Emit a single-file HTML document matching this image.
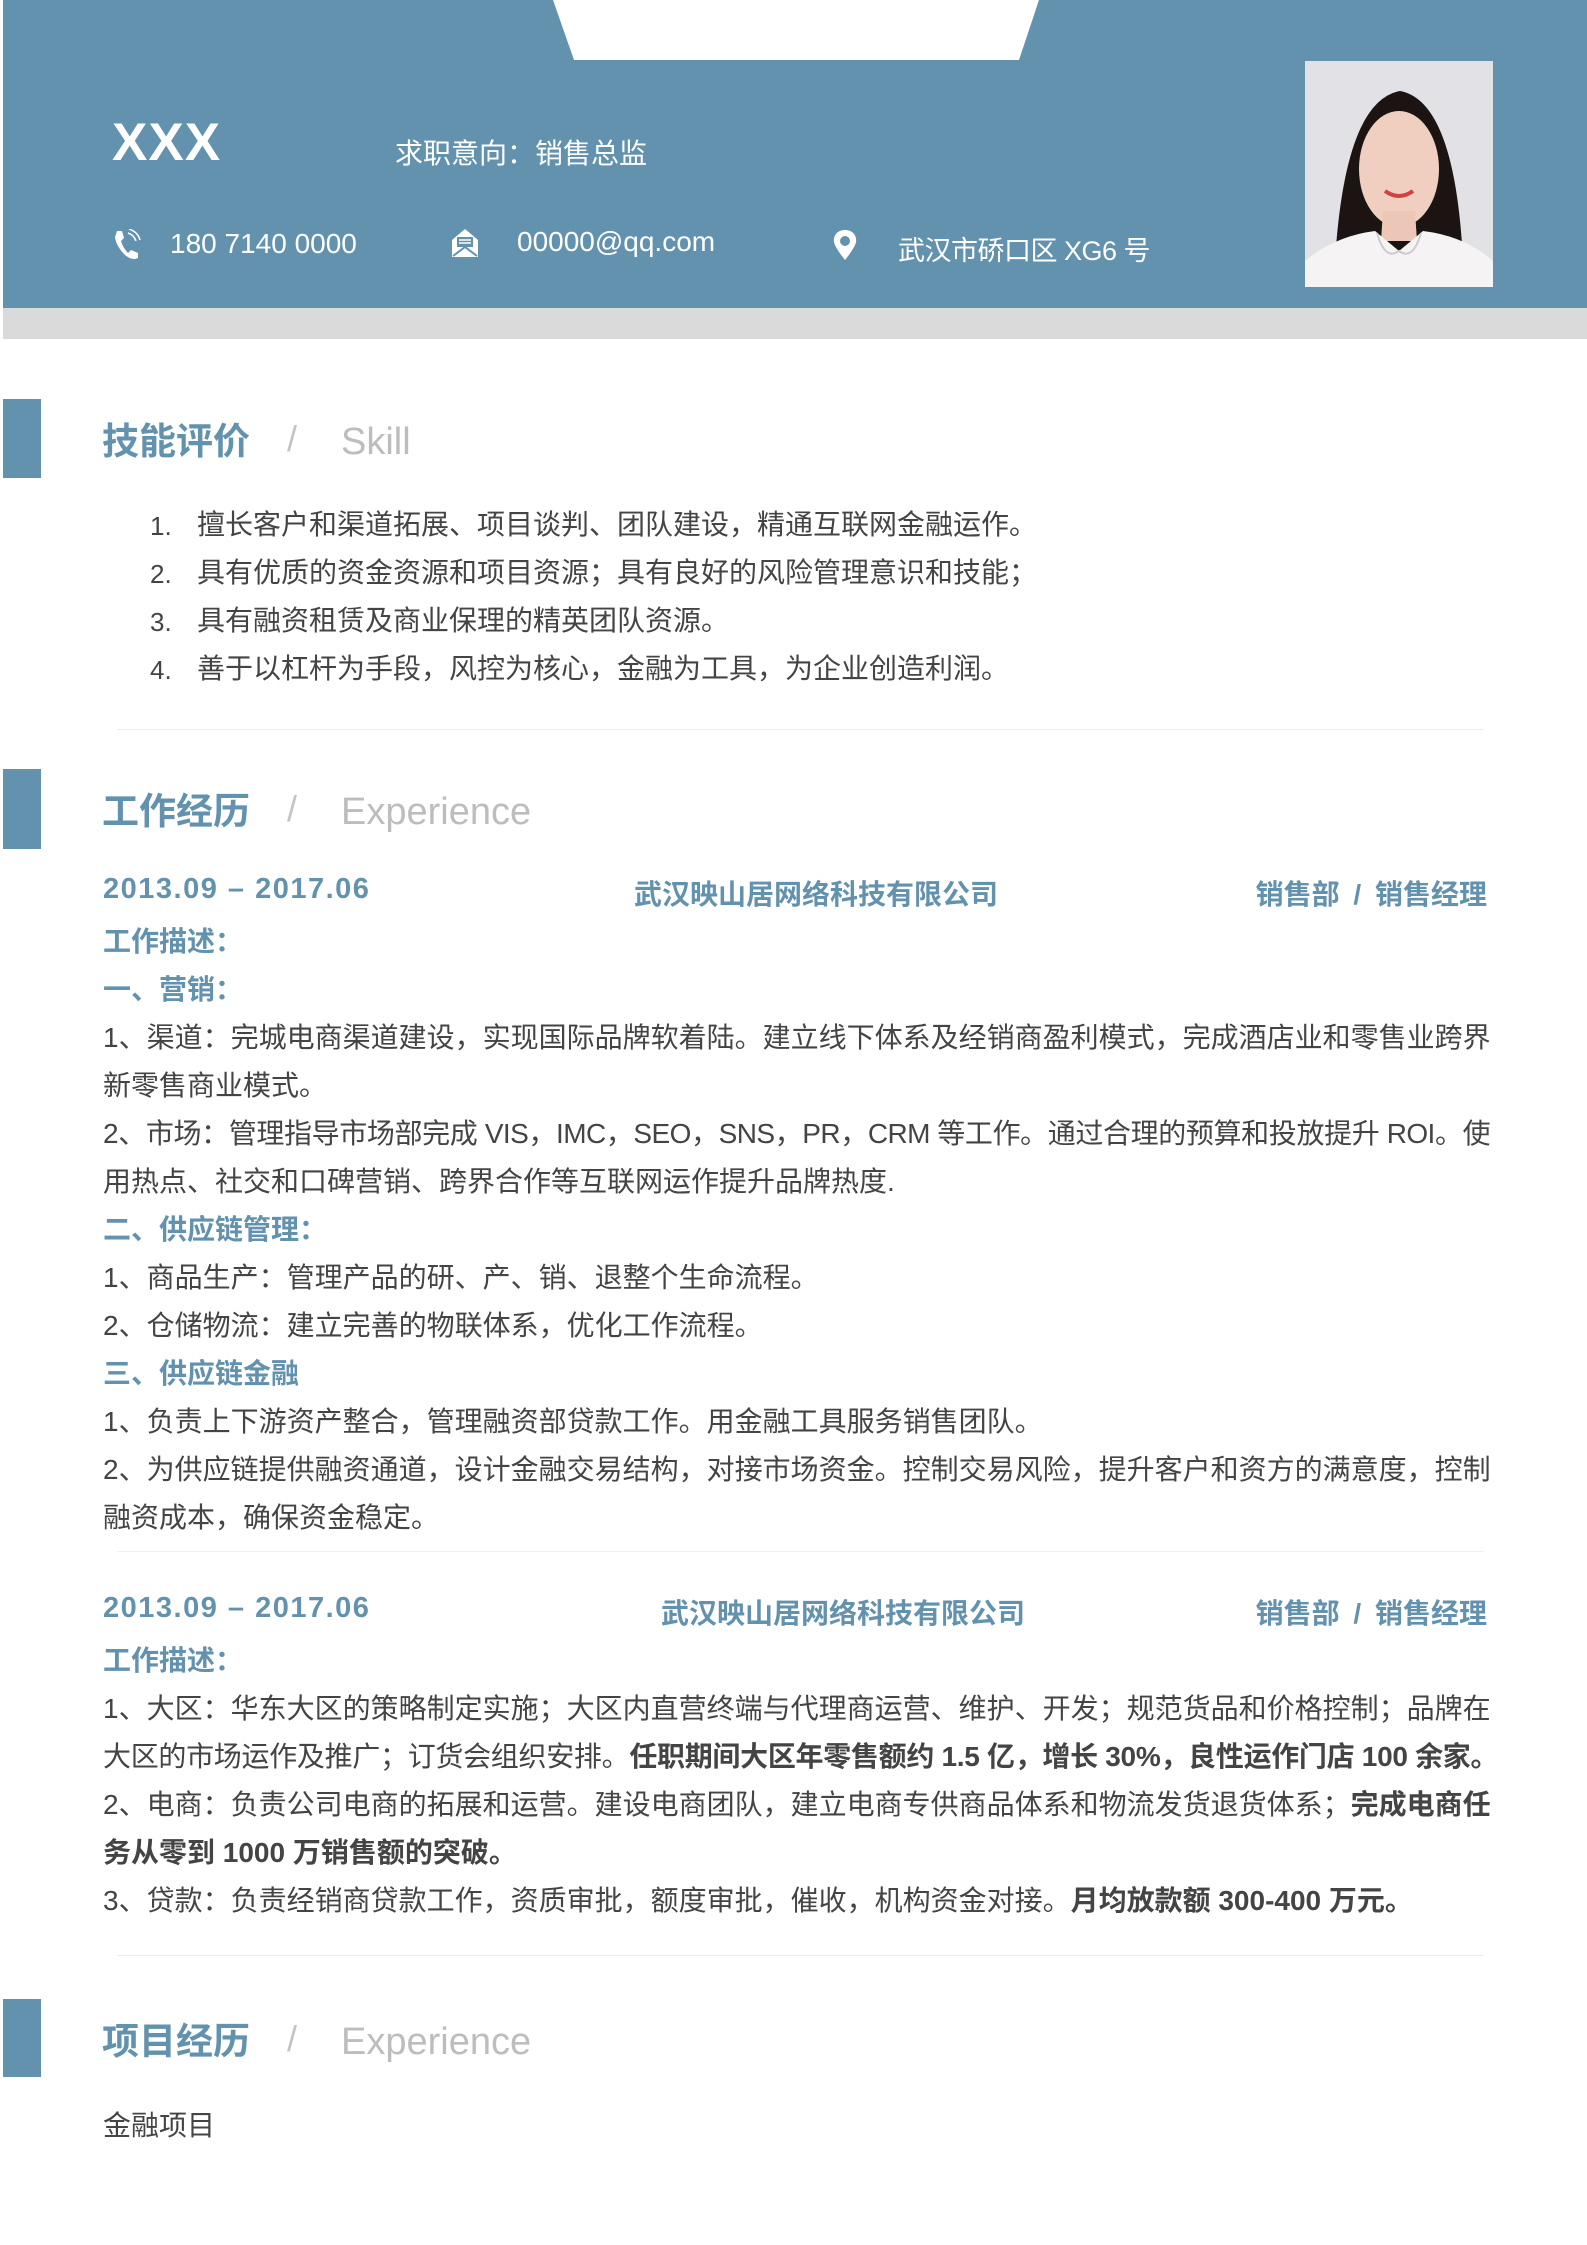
<!DOCTYPE html>
<html><head><meta charset="utf-8"><style>
*{margin:0;padding:0;box-sizing:border-box}
body{width:1587px;height:2245px;background:#fff;position:relative;overflow:hidden;font-family:"Liberation Sans","Noto Sans CJK SC",sans-serif;color:#444}
.a{position:absolute;white-space:nowrap}
.hdr{position:absolute;left:3px;top:0;width:1584px;height:308px;background:#6392ae}
.gray{position:absolute;left:3px;top:308px;width:1584px;height:31px;background:#dadada}
.bar{position:absolute;left:3px;width:38px;background:#6392ae}
.tt{font-size:37px;font-weight:bold;color:#6392ae}
.sl{font-size:36px;color:#c4c4c4}
.en{font-size:38px;color:#bdbdbd}
.b{color:#6392ae;font-weight:bold;font-size:28px}
.d{letter-spacing:1.5px;font-size:29px}
.t{position:absolute;left:103px;width:1387px;font-size:28px;line-height:48px;white-space:nowrap}
.j{text-align:justify;text-align-last:justify}
.hr{position:absolute;left:117px;width:1367px;height:1px;background:#ececec}
</style></head><body>
<div class="hdr"></div>
<svg class="a" style="left:553px;top:0" width="487" height="61"><polygon points="0,0 486,0 466,60 21,60" fill="#fff"/></svg>
<div class="gray"></div>
<div class="a" style="left:112px;top:112px;font-size:53px;font-weight:bold;color:#fff;letter-spacing:1px">XXX</div>
<div class="a" style="left:395px;top:132px;font-size:28px;color:#fff">求职意向：销售总监</div>
<svg class="a" style="left:112px;top:229px" width="30" height="32" viewBox="0 0 30 32"><path d="M5 2 L10 2 L12 9 L9 12 Q11 19 16 24 L19 21 L26 24 L26 29 Q20 32 13 26 Q4 17 3 8 Z" fill="#fff"/><path d="M16 4 Q22 6 24 12 M17 0 Q26 3 28 11" stroke="#fff" stroke-width="1.5" fill="none"/></svg>
<div class="a" style="left:170px;top:228px;font-size:28px;color:#fff">180 7140 0000</div>
<svg class="a" style="left:451px;top:228px" width="28" height="30" viewBox="0 0 28 30"><path d="M1 12 L14 1 L27 12 L27 29 L1 29 Z" fill="#fff"/><rect x="6" y="9" width="16" height="10" fill="#6392ae"/><path d="M8 12h12M8 15h12" stroke="#fff" stroke-width="1.5"/><path d="M2 28 L14 19 L26 28" stroke="#6392ae" stroke-width="2" fill="none"/></svg>
<div class="a" style="left:517px;top:226px;font-size:28px;color:#fff">00000@qq.com</div>
<svg class="a" style="left:832px;top:229px" width="26" height="32" viewBox="0 0 26 32"><path d="M13 1 C5 1 1 7 2 13 C3 19 13 31 13 31 C13 31 23 19 24 13 C25 7 21 1 13 1 Z" fill="#fff"/><circle cx="13" cy="12" r="5" fill="#6392ae"/></svg>
<div class="a" style="left:898px;top:229px;font-size:27px;color:#fff;letter-spacing:-0.5px">武汉市硚口区 XG6 号</div>
<svg class="a" style="left:1305px;top:61px" width="188" height="226" viewBox="0 0 188 226"><rect width="188" height="226" fill="#e2e1e6"/><path d="M30 200 Q40 40 95 30 Q150 40 158 200 Z" fill="#1c1412"/><ellipse cx="94" cy="108" rx="40" ry="58" fill="#f0cfc0"/><path d="M78 150 L110 150 L112 180 L76 180 Z" fill="#ecc7b8"/><path d="M0 226 L0 200 Q30 175 70 170 L94 190 L118 170 Q160 175 188 200 L188 226 Z" fill="#f6f3f4"/><path d="M72 172 Q80 200 94 190 Q108 200 116 172" stroke="#ccc" stroke-width="2" fill="none"/><path d="M80 130 Q94 140 108 130" stroke="#c44" stroke-width="4" fill="none"/></svg>

<div class="bar" style="top:399px;height:79px"></div>
<div class="a tt" style="left:102px;top:411px">技能评价</div>
<div class="a sl" style="left:287px;top:418px">/</div>
<div class="a en" style="left:341px;top:421px">Skill</div>
<div class="a" style="left:150px;top:502px;font-size:26px;line-height:48px;color:#444">1.<br>2.<br>3.<br>4.</div>
<div class="a" style="left:197px;top:501px;font-size:28px;line-height:48px;color:#444">擅长客户和渠道拓展、项目谈判、团队建设，精通互联网金融运作。<br>具有优质的资金资源和项目资源；具有良好的风险管理意识和技能；<br>具有融资租赁及商业保理的精英团队资源。<br>善于以杠杆为手段，风控为核心，金融为工具，为企业创造利润。</div>
<div class="hr" style="top:729px"></div>

<div class="bar" style="top:769px;height:80px"></div>
<div class="a tt" style="left:102px;top:781px">工作经历</div>
<div class="a sl" style="left:287px;top:788px">/</div>
<div class="a en" style="left:341px;top:791px">Experience</div>

<div class="a b d" style="left:103px;top:873px">2013.09 – 2017.06</div>
<div class="a b" style="left:634px;top:873px">武汉映山居网络科技有限公司</div>
<div class="a b" style="right:100px;top:873px;word-spacing:6px">销售部 / 销售经理</div>
<div class="t" style="top:918px">
<div class="b">工作描述：</div>
<div class="b">一、营销：</div>
<div class="j">1、渠道：完城电商渠道建设，实现国际品牌软着陆。建立线下体系及经销商盈利模式，完成酒店业和零售业跨界</div>
<div>新零售商业模式。</div>
<div class="j" style="letter-spacing:-0.6px">2、市场：管理指导市场部完成 VIS，IMC，SEO，SNS，PR，CRM 等工作。通过合理的预算和投放提升 ROI。使</div>
<div>用热点、社交和口碑营销、跨界合作等互联网运作提升品牌热度.</div>
<div class="b">二、供应链管理：</div>
<div>1、商品生产：管理产品的研、产、销、退整个生命流程。</div>
<div>2、仓储物流：建立完善的物联体系，优化工作流程。</div>
<div class="b">三、供应链金融</div>
<div>1、负责上下游资产整合，管理融资部贷款工作。用金融工具服务销售团队。</div>
<div class="j">2、为供应链提供融资通道，设计金融交易结构，对接市场资金。控制交易风险，提升客户和资方的满意度，控制</div>
<div>融资成本，确保资金稳定。</div>
</div>
<div class="hr" style="top:1551px;background:#f0f0f0"></div>

<div class="a b d" style="left:103px;top:1592px">2013.09 – 2017.06</div>
<div class="a b" style="left:661px;top:1592px">武汉映山居网络科技有限公司</div>
<div class="a b" style="right:100px;top:1592px;word-spacing:6px">销售部 / 销售经理</div>
<div class="t" style="top:1637px">
<div class="b">工作描述：</div>
<div class="j">1、大区：华东大区的策略制定实施；大区内直营终端与代理商运营、维护、开发；规范货品和价格控制；品牌在</div>
<div class="j" style="letter-spacing:-0.3px">大区的市场运作及推广；订货会组织安排。<b>任职期间大区年零售额约 1.5 亿，增长 30%，良性运作门店 100 余家。</b></div>
<div class="j">2、电商：负责公司电商的拓展和运营。建设电商团队，建立电商专供商品体系和物流发货退货体系；<b>完成电商任</b></div>
<div><b>务从零到 1000 万销售额的突破。</b></div>
<div>3、贷款：负责经销商贷款工作，资质审批，额度审批，催收，机构资金对接。<b>月均放款额 300-400 万元。</b></div>
</div>
<div class="hr" style="top:1955px"></div>

<div class="bar" style="top:1999px;height:78px"></div>
<div class="a tt" style="left:102px;top:2011px">项目经历</div>
<div class="a sl" style="left:287px;top:2018px">/</div>
<div class="a en" style="left:341px;top:2021px">Experience</div>
<div class="a" style="left:103px;top:2104px;font-size:28px">金融项目</div>
</body></html>
